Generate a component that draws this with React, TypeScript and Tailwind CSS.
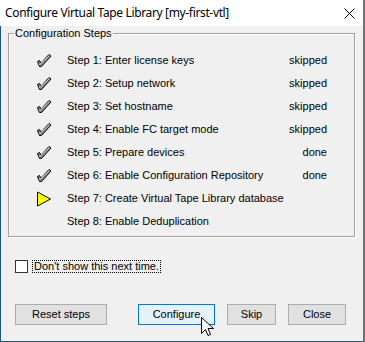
import React from "react";

const steps = [
  { label: "Step 1: Enter license keys", status: "skipped", icon: "check" },
  { label: "Step 2: Setup network", status: "skipped", icon: "check" },
  { label: "Step 3: Set hostname", status: "skipped", icon: "check" },
  { label: "Step 4: Enable FC target mode", status: "skipped", icon: "check" },
  { label: "Step 5: Prepare devices", status: "done", icon: "check" },
  { label: "Step 6: Enable Configuration Repository", status: "done", icon: "check" },
  { label: "Step 7: Create Virtual Tape Library database", status: "", icon: "arrow" },
  { label: "Step 8: Enable Deduplication", status: "", icon: "" },
];

function CheckIcon() {
  return (
    <svg width="16" height="15" viewBox="0 0 16 15">
      <path
        d="M1.5 8.5 L3.5 7.5 L5 10 L13 1.5 L15 3 L5.5 13.5 L3.5 13.5 Z"
        fill="#8a8a8a"
        stroke="#000"
        strokeWidth="1"
        strokeLinejoin="round"
      />
      <path d="M3 12 L13.5 2.5" stroke="#d8d8d8" strokeWidth="1" />
    </svg>
  );
}

function ArrowIcon() {
  return (
    <svg width="16" height="16" viewBox="0 0 16 16">
      <path d="M1.5 1 L14.5 8 L1.5 15 Z" fill="#ffff00" stroke="#000" strokeWidth="1" />
    </svg>
  );
}

function Cursor() {
  return (
    <svg width="13" height="21" viewBox="0 0 13 21">
      <path
        d="M0.5 0.5 L0.5 16.5 L4.5 12.5 L7 18.5 L9.5 17.5 L7 11.5 L12.5 11.5 Z"
        fill="#fff"
        stroke="#000"
        strokeWidth="1"
        strokeLinejoin="miter"
      />
    </svg>
  );
}

export default function App() {
  return (
    <div className="flex h-[342px] w-[365px] flex-col overflow-hidden border-r-2 border-r-[#707070] bg-white font-['Liberation_Sans',Arial,sans-serif] text-[11px] text-black">
      {/* title bar */}
      <div className="flex h-[26px] shrink-0 items-center justify-between bg-white pl-[5px] pr-[8px]">
        <span className="font-['Noto_Sans',sans-serif] text-[12px] leading-none tracking-[-0.35px] text-black">
          Configure Virtual Tape Library [my-first-vtl]
        </span>
        <svg width="11" height="11" viewBox="0 0 11 11">
          <path d="M0.5 0.5 L10.5 10.5 M10.5 0.5 L0.5 10.5" stroke="#000" strokeWidth="1" />
        </svg>
      </div>

      {/* body */}
      <div className="relative flex flex-1 flex-col border-b border-l border-b-[#2a5675] border-l-[#1f5578] bg-[#f0f0f0] px-[7px] pt-[7px]">
        <div className="relative mr-[1px] h-[204px] border border-[#a0a0a0] pr-[27px] pt-[15px] shadow-[1px_1px_0_#ffffff,inset_1px_1px_0_#ffffff]">
          <span className="absolute left-[5px] top-[-8px] bg-[#f0f0f0] px-[1px] leading-[14px]">
            Configuration Steps
          </span>
          <div className="flex flex-col">
            {steps.map((s) => (
              <div key={s.label} className="flex h-[23px] items-center">
                <div className="flex w-[58px] justify-end pr-[15px]">
                  <div className="flex h-[16px] w-[16px] items-center justify-center">
                    {s.icon === "check" && <CheckIcon />}
                    {s.icon === "arrow" && <ArrowIcon />}
                  </div>
                </div>
                <span className="flex-1">{s.label}</span>
                <span>{s.status}</span>
              </div>
            ))}
          </div>
        </div>

        {/* checkbox */}
        <div className="mt-[23px] flex items-center pl-[7px]">
          <div className="h-[13px] w-[13px] border border-[#333333] bg-white" />
          <span className="ml-[4px] border border-dotted border-black px-[1px] leading-[11px]">
            Don&apos;t show this next time.
          </span>
        </div>

        {/* buttons */}
        <div className="relative mt-[31px] flex items-center pl-[7px]">
          <button className="h-[21px] w-[92px] border border-[#adadad] bg-[#e1e1e1]">Reset steps</button>
          <button className="ml-[31px] h-[21px] w-[77px] border border-[#0078d7] bg-[#e5f1fb]">Configure</button>
          <button className="ml-[12px] h-[21px] w-[49px] border border-[#adadad] bg-[#e1e1e1]">Skip</button>
          <button className="ml-[12px] h-[21px] w-[58px] border border-[#adadad] bg-[#e1e1e1]">Close</button>
          <div className="absolute left-[193px] top-[13px]">
            <Cursor />
          </div>
        </div>
      </div>
    </div>
  );
}
